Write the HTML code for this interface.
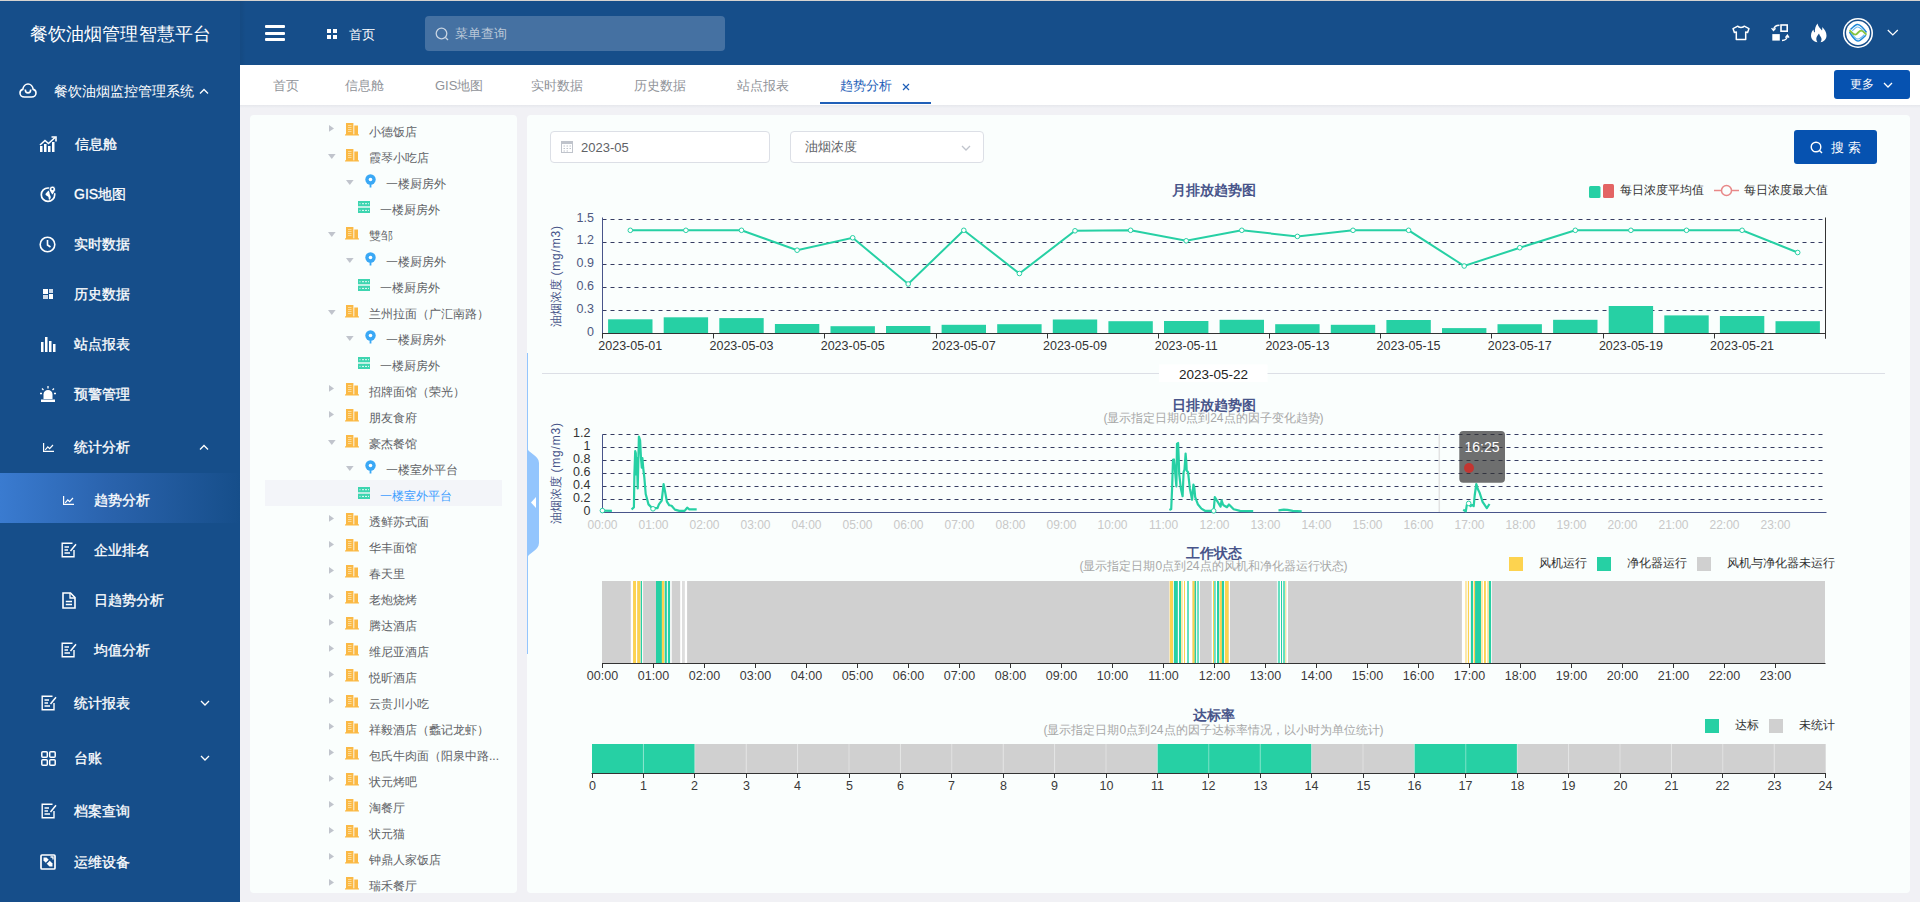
<!DOCTYPE html><html><head><meta charset="utf-8"><style>
*{margin:0;padding:0;box-sizing:border-box}
html,body{width:1920px;height:902px;overflow:hidden;background:#f1f1f5;font-family:"Liberation Sans",sans-serif}
.a{position:absolute}
.mi{position:absolute;color:#fff;font-size:14px;line-height:20px;white-space:nowrap;-webkit-text-stroke:0.3px #fff}
.tab{position:absolute;top:77px;font-size:13px;line-height:18px;color:#909399;white-space:nowrap}
.ti{position:absolute;font-size:12px;line-height:16px;color:#606266;white-space:nowrap}
svg{position:absolute;overflow:visible}
</style></head><body>
<div class="a" style="left:0;top:0;width:1920px;height:1px;background:#d6d3d0"></div>
<div class="a" style="left:0;top:1px;width:1920px;height:64px;background:#164e8a"></div>
<div class="a" style="left:0;top:65px;width:240px;height:837px;background:#164e8a"></div>
<div class="a" style="left:240px;top:1px;width:6px;height:64px;background:linear-gradient(90deg,rgba(0,0,0,0.06),rgba(0,0,0,0))"></div>
<div class="a" style="left:0;top:21px;width:240px;text-align:center;color:#fff;font-size:18px;line-height:26px;letter-spacing:0.2px;padding-left:1px">餐饮油烟管理智慧平台</div>
<div class="a" style="left:0;top:473px;width:240px;height:50px;background:linear-gradient(90deg,#3a7bd0 0%,#2a63ad 45%,#164e8a 100%)"></div>
<div class="mi" style="left:54px;top:81px;-webkit-text-stroke:0">餐饮油烟监控管理系统</div>
<div class="mi" style="left:75px;top:134px;font-size:14px">信息舱</div>
<div class="mi" style="left:74px;top:184px;font-size:14px">GIS地图</div>
<div class="mi" style="left:74px;top:234px;font-size:14px">实时数据</div>
<div class="mi" style="left:74px;top:284px;font-size:14px">历史数据</div>
<div class="mi" style="left:74px;top:334px;font-size:14px">站点报表</div>
<div class="mi" style="left:74px;top:384px;font-size:14px">预警管理</div>
<div class="mi" style="left:74px;top:437px;font-size:14px">统计分析</div>
<div class="mi" style="left:94px;top:490px;font-size:14px">趋势分析</div>
<div class="mi" style="left:94px;top:540px;font-size:14px">企业排名</div>
<div class="mi" style="left:94px;top:590px;font-size:14px">日趋势分析</div>
<div class="mi" style="left:94px;top:640px;font-size:14px">均值分析</div>
<div class="mi" style="left:74px;top:693px;font-size:14px">统计报表</div>
<div class="mi" style="left:74px;top:748px;font-size:14px">台账</div>
<div class="mi" style="left:74px;top:801px;font-size:14px">档案查询</div>
<div class="mi" style="left:74px;top:852px;font-size:14px">运维设备</div>
<svg style="left:199px;top:88px" width="10" height="6"><path d="M1 5.5 L5 1.5 L9 5.5" fill="none" stroke="#fff" stroke-width="1.3"/></svg>
<svg style="left:199px;top:444px" width="10" height="6"><path d="M1 5.5 L5 1.5 L9 5.5" fill="none" stroke="#fff" stroke-width="1.3"/></svg>
<svg style="left:200px;top:700px" width="10" height="6"><path d="M1 1 L5 5 L9 1" fill="none" stroke="#fff" stroke-width="1.3"/></svg>
<svg style="left:200px;top:755px" width="10" height="6"><path d="M1 1 L5 5 L9 1" fill="none" stroke="#fff" stroke-width="1.3"/></svg>
<svg style="left:19px;top:83px" width="18" height="15" viewBox="0 0 18 15"><path d="M5.5 14 C2.8 14 1 12.2 1 10 C1 8.2 2.2 6.8 3.8 6.4 C4.2 3.2 6.5 1 9 1 C11.5 1 13.8 3.2 14.2 6.4 C15.8 6.8 17 8.2 17 10 C17 12.2 15.2 14 12.5 14 Z" fill="none" stroke="#fff" stroke-width="1.6"/><path d="M6.3 6.5 C6.3 11 11.7 11 11.7 6.5" fill="none" stroke="#fff" stroke-width="1.6"/></svg>
<svg style="left:39px;top:136px" width="18" height="17" viewBox="0 0 18 17"><path d="M1 16 V10 H3.5 V16 Z M5 16 V8 H7.5 V16 Z M9 16 V10 H11.5 V16 Z M13 16 V6 H15.5 V16 Z" fill="#fff"/><path d="M1 9 L6 4.5 L9.5 7.5 L16 1.5" fill="none" stroke="#fff" stroke-width="1.6"/><path d="M12.5 1 H17 V5.5" fill="none" stroke="#fff" stroke-width="1.6"/></svg>
<svg style="left:40px;top:186px" width="17" height="17" viewBox="0 0 17 17"><path d="M10.5 2.4 C9.7 2.1 8.9 2 8 2 C4.3 2 1.3 5 1.3 8.7 C1.3 12.4 4.3 15.4 8 15.4 C11.7 15.4 14.7 12.4 14.7 8.7 C14.7 8.2 14.6 7.6 14.5 7.1" fill="none" stroke="#fff" stroke-width="1.7"/><path d="M8.5 4.5 C7.5 5.5 6.8 6.5 5.8 7.5 C5.2 8.1 5.5 9 6.2 9.5 C7 10 8 10.2 8.4 11 C8.8 11.8 8.5 13 9.2 14 C10 13.5 10.5 12.5 10.8 11.5 C11 10.5 10.2 9.5 9.8 8.5 C9.5 7.5 9.8 6 8.5 4.5 Z" fill="#fff"/><path d="M12.4 0.1 C10.5 0.1 9.2 1.5 9.2 3.2 C9.2 5 11 7 12.4 9.2 C13.8 7 15.6 5 15.6 3.2 C15.6 1.5 14.3 0.1 12.4 0.1 Z" fill="#fff" stroke="#164e8a" stroke-width="0.9"/><circle cx="12.4" cy="3.1" r="1.1" fill="#164e8a"/></svg>
<svg style="left:39px;top:236px" width="17" height="17" viewBox="0 0 17 17"><circle cx="8.5" cy="8.5" r="7.3" fill="none" stroke="#fff" stroke-width="1.6"/><path d="M8.5 4 V9 L11.5 11" fill="none" stroke="#fff" stroke-width="1.6"/></svg>
<svg style="left:43px;top:289px" width="10" height="10" viewBox="0 0 10 10"><rect x="0" y="0" width="5" height="5" fill="#fff"/><rect x="6" y="0" width="4" height="4" fill="#fff" opacity="0.8"/><rect x="0" y="6" width="5" height="4" fill="#fff" opacity="0.8"/><rect x="6" y="5" width="4" height="5" fill="#fff"/></svg>
<svg style="left:41px;top:337px" width="16" height="15" viewBox="0 0 16 15"><rect x="0" y="5" width="2.5" height="10" fill="#fff"/><rect x="4" y="0" width="2.5" height="15" fill="#fff"/><rect x="8" y="4" width="2.5" height="11" fill="#fff"/><rect x="12" y="7" width="2.5" height="8" fill="#fff"/></svg>
<svg style="left:40px;top:386px" width="16" height="16" viewBox="0 0 16 16"><path d="M3.5 13 V8.5 C3.5 5.5 5.5 4 8 4 C10.5 4 12.5 5.5 12.5 8.5 V13 Z" fill="#fff"/><rect x="1" y="13.5" width="14" height="2.5" fill="#fff"/><path d="M8 0 V2.5 M2 2.5 L3.5 4 M14 2.5 L12.5 4 M0 7.5 H2 M14 7.5 H16" stroke="#fff" stroke-width="1.3"/></svg>
<svg style="left:43px;top:443px" width="12" height="10" viewBox="0 0 12 10"><path d="M0.6 0 V8.4 H11" fill="none" stroke="#fff" stroke-width="1.2"/><path d="M2.2 6.8 L4.8 3.8 L6.6 5.6 L10 2" fill="none" stroke="#fff" stroke-width="1.2"/></svg>
<svg style="left:63px;top:496px" width="12" height="10" viewBox="0 0 12 10"><path d="M0.6 0 V8.4 H11" fill="none" stroke="#fff" stroke-width="1.2"/><path d="M2.2 6.8 L4.8 3.8 L6.6 5.6 L10 2" fill="none" stroke="#fff" stroke-width="1.2"/></svg>
<svg style="left:61px;top:542px" width="16" height="16" viewBox="0 0 16 16"><path d="M11.5 1.2 H1.2 V14.8 H13 V8" fill="none" stroke="#fff" stroke-width="1.4"/><path d="M3.5 5 H8 M3.5 8 H7 M3.5 11 H9" stroke="#fff" stroke-width="1.4"/><path d="M9.5 9 L15 2.2" stroke="#fff" stroke-width="1.5"/></svg>
<svg style="left:61px;top:642px" width="16" height="16" viewBox="0 0 16 16"><path d="M11.5 1.2 H1.2 V14.8 H13 V8" fill="none" stroke="#fff" stroke-width="1.4"/><path d="M3.5 5 H8 M3.5 8 H7 M3.5 11 H9" stroke="#fff" stroke-width="1.4"/><path d="M9.5 9 L15 2.2" stroke="#fff" stroke-width="1.5"/></svg>
<svg style="left:41px;top:695px" width="16" height="16" viewBox="0 0 16 16"><path d="M11.5 1.2 H1.2 V14.8 H13 V8" fill="none" stroke="#fff" stroke-width="1.4"/><path d="M3.5 5 H8 M3.5 8 H7 M3.5 11 H9" stroke="#fff" stroke-width="1.4"/><path d="M9.5 9 L15 2.2" stroke="#fff" stroke-width="1.5"/></svg>
<svg style="left:41px;top:803px" width="16" height="16" viewBox="0 0 16 16"><path d="M11.5 1.2 H1.2 V14.8 H13 V8" fill="none" stroke="#fff" stroke-width="1.4"/><path d="M3.5 5 H8 M3.5 8 H7 M3.5 11 H9" stroke="#fff" stroke-width="1.4"/><path d="M9.5 9 L15 2.2" stroke="#fff" stroke-width="1.5"/></svg>
<svg style="left:62px;top:592px" width="14" height="17" viewBox="0 0 14 17"><path d="M1 1 H8.5 L13 5.5 V16 H1 Z" fill="none" stroke="#fff" stroke-width="1.6"/><path d="M8 1 V6 H13" fill="none" stroke="#fff" stroke-width="1.3"/><path d="M3.8 9.5 H10 M3.8 12.5 H10" stroke="#fff" stroke-width="1.5"/></svg>
<svg style="left:41px;top:751px" width="15" height="15" viewBox="0 0 15 15"><rect x="0.8" y="0.8" width="5.5" height="5.5" rx="1" fill="none" stroke="#fff" stroke-width="1.5"/><rect x="8.7" y="0.8" width="5.5" height="5.5" rx="1" fill="none" stroke="#fff" stroke-width="1.5"/><rect x="0.8" y="8.7" width="5.5" height="5.5" rx="1" fill="none" stroke="#fff" stroke-width="1.5"/><rect x="8.7" y="8.7" width="5.5" height="5.5" rx="1" fill="none" stroke="#fff" stroke-width="1.5"/></svg>
<svg style="left:40px;top:854px" width="16" height="16" viewBox="0 0 16 16"><path d="M2 1 H14 C14.6 1 15 1.4 15 2 V14 C15 14.6 14.6 15 14 15 H2 C1.4 15 1 14.6 1 14 V2 C1 1.4 1.4 1 2 1 Z" fill="none" stroke="#fff" stroke-width="1.7"/><path d="M3.5 3.5 L6.5 3.5 L12.5 9.5 L12.5 12.5 L9.5 12.5 L3.5 6.5 Z" fill="#fff"/><path d="M6 9.5 L9.5 6" stroke="#164e8a" stroke-width="1.4"/><path d="M10.5 3 L13 3 L13 5.5" fill="none" stroke="#fff" stroke-width="1.3"/></svg>
<div class="a" style="left:265px;top:25px;width:20px;height:3px;background:#fff;border-radius:1px"></div>
<div class="a" style="left:265px;top:32px;width:20px;height:3px;background:#fff;border-radius:1px"></div>
<div class="a" style="left:265px;top:38px;width:20px;height:3px;background:#fff;border-radius:1px"></div>
<div class="a" style="left:327px;top:29px;width:4px;height:4px;background:#fff"></div>
<div class="a" style="left:327px;top:35px;width:4px;height:4px;background:#fff"></div>
<div class="a" style="left:333px;top:29px;width:4px;height:4px;background:#fff"></div>
<div class="a" style="left:333px;top:35px;width:4px;height:4px;background:#fff"></div>
<div class="a" style="left:349px;top:26px;color:#fff;font-size:13px;line-height:18px">首页</div>
<div class="a" style="left:425px;top:16px;width:300px;height:35px;background:#4571a2;border-radius:4px"></div>
<svg style="left:435px;top:27px" width="14" height="14"><circle cx="6.5" cy="6.5" r="5.3" fill="none" stroke="#c8d4e2" stroke-width="1.3"/><path d="M10.5 10.5 L13 13" stroke="#c8d4e2" stroke-width="1.3"/></svg>
<div class="a" style="left:455px;top:25px;color:#b9c7d8;font-size:13px;line-height:18px">菜单查询</div>
<svg style="left:1732px;top:25px" width="18" height="16"><path d="M5.8 1.2 L1 3.6 L2.4 7.4 L4.3 6.9 V14.6 H13.7 V6.9 L15.6 7.4 L17 3.6 L12.2 1.2 C11.4 2.8 6.6 2.8 5.8 1.2 Z" fill="none" stroke="#fff" stroke-width="1.5" stroke-linejoin="round"/></svg>
<svg style="left:1771px;top:24px" width="18" height="18"><rect x="10" y="1" width="6.2" height="6.2" fill="none" stroke="#fff" stroke-width="1.6"/><rect x="1.3" y="10.1" width="7.5" height="6.5" fill="#fff"/><path d="M8.5 1.3 C5 1.3 3 3 2.6 6" fill="none" stroke="#fff" stroke-width="1.5"/><path d="M0.6 4.2 L2.5 6.6 L4.6 4.4" fill="none" stroke="#fff" stroke-width="1.3"/><path d="M11 16.5 C14 16.5 16 15 16.4 12" fill="none" stroke="#fff" stroke-width="1.5"/><path d="M14.4 13.6 L16.4 11.2 L18 13.6" fill="none" stroke="#fff" stroke-width="1.3"/></svg>
<svg style="left:1810px;top:23px" width="18" height="20"><path d="M7.5 0.5 C8 3.5 10 5 12 7.5 C12.5 6 12.3 5 12 4 C14.5 6 16.5 9 16.5 12.5 C16.5 16.5 13.5 19 10.5 19.3 C11.8 17.5 12 15.5 10.5 13.5 C10 12.8 9.3 11.8 9 10.5 C8 12 7 13 6.5 14.5 C6 16 6.5 18 7.5 19.3 C3.5 18.5 1 16 1 12.5 C1 9.5 2.5 7.5 3.5 6.5 C3.5 8 4 9 5 9.5 C4.5 6 5.5 3 7.5 0.5 Z" fill="#fff"/></svg>
<svg style="left:1843px;top:18px" width="30" height="30"><circle cx="15" cy="15" r="15" fill="#fff"/><circle cx="15" cy="15" r="13.4" fill="#164e8a"/><circle cx="15" cy="15" r="11.9" fill="#fff"/><path d="M7.5 11.5 C10 9 12 7 14 6.5 C16 6 17.5 7.5 19 9 C20.5 10.5 22 12 23.5 14.5" fill="none" stroke="#1e88d8" stroke-width="1.5"/><path d="M9.2 12.8 C11 11 12.5 9.5 14 9 C15.5 8.6 17 9.8 18.5 11.2 C19.8 12.5 20.8 13.5 21.8 15" fill="none" stroke="#6cb8ec" stroke-width="1.1"/><path d="M6.5 14 C8 16.5 10 19.5 12 21.5 C13.5 23 15.5 23.3 17 22.3 C19 21 21 19 22.8 17.2" fill="none" stroke="#1e88d8" stroke-width="1.5"/><path d="M8.5 15.5 C10 17.5 11.5 19.5 13 20.5 C14.5 21.3 16 21 17.5 20 C19 19 20 18 21.3 16.6" fill="none" stroke="#6cb8ec" stroke-width="1.1"/><path d="M6.3 12.4 C8.3 13.2 9.8 16.6 12.3 16.6 C14.6 16.6 15.6 12.6 18.1 12.6 C20.4 12.6 22 15.6 23.6 16.6" fill="none" stroke="#86c440" stroke-width="1.9"/></svg>
<svg style="left:1887px;top:29px" width="12" height="8"><path d="M0.8 1 L5.8 6 L10.8 1" fill="none" stroke="#fff" stroke-width="1.2"/></svg>
<div class="a" style="left:240px;top:65px;width:1680px;height:40px;background:#fff"></div>
<div class="a" style="left:240px;top:105px;width:1680px;height:3px;background:linear-gradient(180deg,#e6e7ec,#f0f1f5)"></div>
<div class="tab" style="left:273px">首页</div>
<div class="tab" style="left:345px">信息舱</div>
<div class="tab" style="left:435px">GIS地图</div>
<div class="tab" style="left:531px">实时数据</div>
<div class="tab" style="left:634px">历史数据</div>
<div class="tab" style="left:737px">站点报表</div>
<div class="tab" style="left:840px;color:#1f5fb8">趋势分析</div>
<svg style="left:902px;top:83px" width="8" height="8"><path d="M1 1 L7 7 M7 1 L1 7" stroke="#1f5fb8" stroke-width="1.2"/></svg>
<div class="a" style="left:820px;top:102px;width:111px;height:2px;background:#1f5fb8"></div>
<div class="a" style="left:1834px;top:70px;width:76px;height:29px;background:#0652b0;border-radius:3px"></div>
<div class="a" style="left:1850px;top:76px;color:#fff;font-size:12px;line-height:17px">更多</div>
<svg style="left:1883px;top:82px" width="10" height="6"><path d="M1 1 L5 5 L9 1" fill="none" stroke="#fff" stroke-width="1.3"/></svg>
<div class="a" style="left:250px;top:115px;width:267px;height:778px;background:#fafefd;border-radius:4px"></div>
<div class="a" style="left:265px;top:480px;width:237px;height:26px;background:#f3f5f9"></div>
<svg style="left:329px;top:125px" width="6" height="8"><path d="M0 0 L5 3.4 L0 6.8 Z" fill="#c0c4cc"/></svg>
<svg style="left:345px;top:123px" width="14" height="13"><path d="M1 0 H8.4 V12 H1 Z M9.3 2.5 H13 V12 H9.3 Z" fill="#fbb945"/><path d="M3 2.5 H6.5 M3 4.5 H6.5 M3 6.5 H6.5 M3 8.5 H6.5" stroke="#fde0a0" stroke-width="0.9"/><rect x="0" y="11.3" width="14" height="1.2" fill="#fbb945"/></svg>
<div class="ti" style="left:369px;top:123.5px;color:#606266">小德饭店</div>
<svg style="left:327.5px;top:154px" width="9" height="6"><path d="M0 0 L7.6 0 L3.8 5 Z" fill="#c0c4cc"/></svg>
<svg style="left:345px;top:149px" width="14" height="13"><path d="M1 0 H8.4 V12 H1 Z M9.3 2.5 H13 V12 H9.3 Z" fill="#fbb945"/><path d="M3 2.5 H6.5 M3 4.5 H6.5 M3 6.5 H6.5 M3 8.5 H6.5" stroke="#fde0a0" stroke-width="0.9"/><rect x="0" y="11.3" width="14" height="1.2" fill="#fbb945"/></svg>
<div class="ti" style="left:369px;top:149.5px;color:#606266">霞琴小吃店</div>
<svg style="left:345.5px;top:180px" width="9" height="6"><path d="M0 0 L7.6 0 L3.8 5 Z" fill="#c0c4cc"/></svg>
<svg style="left:365px;top:174px" width="11" height="14"><circle cx="5.5" cy="5.5" r="5.2" fill="#3aa8f5"/><circle cx="5.5" cy="5.5" r="1.8" fill="#fff"/><path d="M4.6 9 H6.4 V13.5 H4.6 Z" fill="#3aa8f5"/></svg>
<div class="ti" style="left:386px;top:175.5px;color:#606266">一楼厨房外</div>
<svg style="left:358px;top:201px" width="12" height="12"><rect x="0" y="0" width="12" height="5.3" fill="#3dd5b0"/><rect x="0" y="6.7" width="12" height="5.3" fill="#3dd5b0"/><path d="M1.5 2.7 H2.5 M4 2.7 H6 M7 2.7 H9 M10 2.7 H11 M1.5 9.4 H2.5 M4 9.4 H6 M7 9.4 H9 M10 9.4 H11" stroke="#e8fbf6" stroke-width="1"/></svg>
<div class="ti" style="left:380px;top:201.5px;color:#606266">一楼厨房外</div>
<svg style="left:327.5px;top:232px" width="9" height="6"><path d="M0 0 L7.6 0 L3.8 5 Z" fill="#c0c4cc"/></svg>
<svg style="left:345px;top:227px" width="14" height="13"><path d="M1 0 H8.4 V12 H1 Z M9.3 2.5 H13 V12 H9.3 Z" fill="#fbb945"/><path d="M3 2.5 H6.5 M3 4.5 H6.5 M3 6.5 H6.5 M3 8.5 H6.5" stroke="#fde0a0" stroke-width="0.9"/><rect x="0" y="11.3" width="14" height="1.2" fill="#fbb945"/></svg>
<div class="ti" style="left:369px;top:227.5px;color:#606266">雙邹</div>
<svg style="left:345.5px;top:258px" width="9" height="6"><path d="M0 0 L7.6 0 L3.8 5 Z" fill="#c0c4cc"/></svg>
<svg style="left:365px;top:252px" width="11" height="14"><circle cx="5.5" cy="5.5" r="5.2" fill="#3aa8f5"/><circle cx="5.5" cy="5.5" r="1.8" fill="#fff"/><path d="M4.6 9 H6.4 V13.5 H4.6 Z" fill="#3aa8f5"/></svg>
<div class="ti" style="left:386px;top:253.5px;color:#606266">一楼厨房外</div>
<svg style="left:358px;top:279px" width="12" height="12"><rect x="0" y="0" width="12" height="5.3" fill="#3dd5b0"/><rect x="0" y="6.7" width="12" height="5.3" fill="#3dd5b0"/><path d="M1.5 2.7 H2.5 M4 2.7 H6 M7 2.7 H9 M10 2.7 H11 M1.5 9.4 H2.5 M4 9.4 H6 M7 9.4 H9 M10 9.4 H11" stroke="#e8fbf6" stroke-width="1"/></svg>
<div class="ti" style="left:380px;top:279.5px;color:#606266">一楼厨房外</div>
<svg style="left:327.5px;top:310px" width="9" height="6"><path d="M0 0 L7.6 0 L3.8 5 Z" fill="#c0c4cc"/></svg>
<svg style="left:345px;top:305px" width="14" height="13"><path d="M1 0 H8.4 V12 H1 Z M9.3 2.5 H13 V12 H9.3 Z" fill="#fbb945"/><path d="M3 2.5 H6.5 M3 4.5 H6.5 M3 6.5 H6.5 M3 8.5 H6.5" stroke="#fde0a0" stroke-width="0.9"/><rect x="0" y="11.3" width="14" height="1.2" fill="#fbb945"/></svg>
<div class="ti" style="left:369px;top:305.5px;color:#606266">兰州拉面（广汇南路）</div>
<svg style="left:345.5px;top:336px" width="9" height="6"><path d="M0 0 L7.6 0 L3.8 5 Z" fill="#c0c4cc"/></svg>
<svg style="left:365px;top:330px" width="11" height="14"><circle cx="5.5" cy="5.5" r="5.2" fill="#3aa8f5"/><circle cx="5.5" cy="5.5" r="1.8" fill="#fff"/><path d="M4.6 9 H6.4 V13.5 H4.6 Z" fill="#3aa8f5"/></svg>
<div class="ti" style="left:386px;top:331.5px;color:#606266">一楼厨房外</div>
<svg style="left:358px;top:357px" width="12" height="12"><rect x="0" y="0" width="12" height="5.3" fill="#3dd5b0"/><rect x="0" y="6.7" width="12" height="5.3" fill="#3dd5b0"/><path d="M1.5 2.7 H2.5 M4 2.7 H6 M7 2.7 H9 M10 2.7 H11 M1.5 9.4 H2.5 M4 9.4 H6 M7 9.4 H9 M10 9.4 H11" stroke="#e8fbf6" stroke-width="1"/></svg>
<div class="ti" style="left:380px;top:357.5px;color:#606266">一楼厨房外</div>
<svg style="left:329px;top:385px" width="6" height="8"><path d="M0 0 L5 3.4 L0 6.8 Z" fill="#c0c4cc"/></svg>
<svg style="left:345px;top:383px" width="14" height="13"><path d="M1 0 H8.4 V12 H1 Z M9.3 2.5 H13 V12 H9.3 Z" fill="#fbb945"/><path d="M3 2.5 H6.5 M3 4.5 H6.5 M3 6.5 H6.5 M3 8.5 H6.5" stroke="#fde0a0" stroke-width="0.9"/><rect x="0" y="11.3" width="14" height="1.2" fill="#fbb945"/></svg>
<div class="ti" style="left:369px;top:383.5px;color:#606266">招牌面馆（荣光）</div>
<svg style="left:329px;top:411px" width="6" height="8"><path d="M0 0 L5 3.4 L0 6.8 Z" fill="#c0c4cc"/></svg>
<svg style="left:345px;top:409px" width="14" height="13"><path d="M1 0 H8.4 V12 H1 Z M9.3 2.5 H13 V12 H9.3 Z" fill="#fbb945"/><path d="M3 2.5 H6.5 M3 4.5 H6.5 M3 6.5 H6.5 M3 8.5 H6.5" stroke="#fde0a0" stroke-width="0.9"/><rect x="0" y="11.3" width="14" height="1.2" fill="#fbb945"/></svg>
<div class="ti" style="left:369px;top:409.5px;color:#606266">朋友食府</div>
<svg style="left:327.5px;top:440px" width="9" height="6"><path d="M0 0 L7.6 0 L3.8 5 Z" fill="#c0c4cc"/></svg>
<svg style="left:345px;top:435px" width="14" height="13"><path d="M1 0 H8.4 V12 H1 Z M9.3 2.5 H13 V12 H9.3 Z" fill="#fbb945"/><path d="M3 2.5 H6.5 M3 4.5 H6.5 M3 6.5 H6.5 M3 8.5 H6.5" stroke="#fde0a0" stroke-width="0.9"/><rect x="0" y="11.3" width="14" height="1.2" fill="#fbb945"/></svg>
<div class="ti" style="left:369px;top:435.5px;color:#606266">豪杰餐馆</div>
<svg style="left:345.5px;top:466px" width="9" height="6"><path d="M0 0 L7.6 0 L3.8 5 Z" fill="#c0c4cc"/></svg>
<svg style="left:365px;top:460px" width="11" height="14"><circle cx="5.5" cy="5.5" r="5.2" fill="#3aa8f5"/><circle cx="5.5" cy="5.5" r="1.8" fill="#fff"/><path d="M4.6 9 H6.4 V13.5 H4.6 Z" fill="#3aa8f5"/></svg>
<div class="ti" style="left:386px;top:461.5px;color:#606266">一楼室外平台</div>
<svg style="left:358px;top:487px" width="12" height="12"><rect x="0" y="0" width="12" height="5.3" fill="#3dd5b0"/><rect x="0" y="6.7" width="12" height="5.3" fill="#3dd5b0"/><path d="M1.5 2.7 H2.5 M4 2.7 H6 M7 2.7 H9 M10 2.7 H11 M1.5 9.4 H2.5 M4 9.4 H6 M7 9.4 H9 M10 9.4 H11" stroke="#e8fbf6" stroke-width="1"/></svg>
<div class="ti" style="left:380px;top:487.5px;color:#409eff">一楼室外平台</div>
<svg style="left:329px;top:515px" width="6" height="8"><path d="M0 0 L5 3.4 L0 6.8 Z" fill="#c0c4cc"/></svg>
<svg style="left:345px;top:513px" width="14" height="13"><path d="M1 0 H8.4 V12 H1 Z M9.3 2.5 H13 V12 H9.3 Z" fill="#fbb945"/><path d="M3 2.5 H6.5 M3 4.5 H6.5 M3 6.5 H6.5 M3 8.5 H6.5" stroke="#fde0a0" stroke-width="0.9"/><rect x="0" y="11.3" width="14" height="1.2" fill="#fbb945"/></svg>
<div class="ti" style="left:369px;top:513.5px;color:#606266">透鲜苏式面</div>
<svg style="left:329px;top:541px" width="6" height="8"><path d="M0 0 L5 3.4 L0 6.8 Z" fill="#c0c4cc"/></svg>
<svg style="left:345px;top:539px" width="14" height="13"><path d="M1 0 H8.4 V12 H1 Z M9.3 2.5 H13 V12 H9.3 Z" fill="#fbb945"/><path d="M3 2.5 H6.5 M3 4.5 H6.5 M3 6.5 H6.5 M3 8.5 H6.5" stroke="#fde0a0" stroke-width="0.9"/><rect x="0" y="11.3" width="14" height="1.2" fill="#fbb945"/></svg>
<div class="ti" style="left:369px;top:539.5px;color:#606266">华丰面馆</div>
<svg style="left:329px;top:567px" width="6" height="8"><path d="M0 0 L5 3.4 L0 6.8 Z" fill="#c0c4cc"/></svg>
<svg style="left:345px;top:565px" width="14" height="13"><path d="M1 0 H8.4 V12 H1 Z M9.3 2.5 H13 V12 H9.3 Z" fill="#fbb945"/><path d="M3 2.5 H6.5 M3 4.5 H6.5 M3 6.5 H6.5 M3 8.5 H6.5" stroke="#fde0a0" stroke-width="0.9"/><rect x="0" y="11.3" width="14" height="1.2" fill="#fbb945"/></svg>
<div class="ti" style="left:369px;top:565.5px;color:#606266">春天里</div>
<svg style="left:329px;top:593px" width="6" height="8"><path d="M0 0 L5 3.4 L0 6.8 Z" fill="#c0c4cc"/></svg>
<svg style="left:345px;top:591px" width="14" height="13"><path d="M1 0 H8.4 V12 H1 Z M9.3 2.5 H13 V12 H9.3 Z" fill="#fbb945"/><path d="M3 2.5 H6.5 M3 4.5 H6.5 M3 6.5 H6.5 M3 8.5 H6.5" stroke="#fde0a0" stroke-width="0.9"/><rect x="0" y="11.3" width="14" height="1.2" fill="#fbb945"/></svg>
<div class="ti" style="left:369px;top:591.5px;color:#606266">老炮烧烤</div>
<svg style="left:329px;top:619px" width="6" height="8"><path d="M0 0 L5 3.4 L0 6.8 Z" fill="#c0c4cc"/></svg>
<svg style="left:345px;top:617px" width="14" height="13"><path d="M1 0 H8.4 V12 H1 Z M9.3 2.5 H13 V12 H9.3 Z" fill="#fbb945"/><path d="M3 2.5 H6.5 M3 4.5 H6.5 M3 6.5 H6.5 M3 8.5 H6.5" stroke="#fde0a0" stroke-width="0.9"/><rect x="0" y="11.3" width="14" height="1.2" fill="#fbb945"/></svg>
<div class="ti" style="left:369px;top:617.5px;color:#606266">腾达酒店</div>
<svg style="left:329px;top:645px" width="6" height="8"><path d="M0 0 L5 3.4 L0 6.8 Z" fill="#c0c4cc"/></svg>
<svg style="left:345px;top:643px" width="14" height="13"><path d="M1 0 H8.4 V12 H1 Z M9.3 2.5 H13 V12 H9.3 Z" fill="#fbb945"/><path d="M3 2.5 H6.5 M3 4.5 H6.5 M3 6.5 H6.5 M3 8.5 H6.5" stroke="#fde0a0" stroke-width="0.9"/><rect x="0" y="11.3" width="14" height="1.2" fill="#fbb945"/></svg>
<div class="ti" style="left:369px;top:643.5px;color:#606266">维尼亚酒店</div>
<svg style="left:329px;top:671px" width="6" height="8"><path d="M0 0 L5 3.4 L0 6.8 Z" fill="#c0c4cc"/></svg>
<svg style="left:345px;top:669px" width="14" height="13"><path d="M1 0 H8.4 V12 H1 Z M9.3 2.5 H13 V12 H9.3 Z" fill="#fbb945"/><path d="M3 2.5 H6.5 M3 4.5 H6.5 M3 6.5 H6.5 M3 8.5 H6.5" stroke="#fde0a0" stroke-width="0.9"/><rect x="0" y="11.3" width="14" height="1.2" fill="#fbb945"/></svg>
<div class="ti" style="left:369px;top:669.5px;color:#606266">悦昕酒店</div>
<svg style="left:329px;top:697px" width="6" height="8"><path d="M0 0 L5 3.4 L0 6.8 Z" fill="#c0c4cc"/></svg>
<svg style="left:345px;top:695px" width="14" height="13"><path d="M1 0 H8.4 V12 H1 Z M9.3 2.5 H13 V12 H9.3 Z" fill="#fbb945"/><path d="M3 2.5 H6.5 M3 4.5 H6.5 M3 6.5 H6.5 M3 8.5 H6.5" stroke="#fde0a0" stroke-width="0.9"/><rect x="0" y="11.3" width="14" height="1.2" fill="#fbb945"/></svg>
<div class="ti" style="left:369px;top:695.5px;color:#606266">云贵川小吃</div>
<svg style="left:329px;top:723px" width="6" height="8"><path d="M0 0 L5 3.4 L0 6.8 Z" fill="#c0c4cc"/></svg>
<svg style="left:345px;top:721px" width="14" height="13"><path d="M1 0 H8.4 V12 H1 Z M9.3 2.5 H13 V12 H9.3 Z" fill="#fbb945"/><path d="M3 2.5 H6.5 M3 4.5 H6.5 M3 6.5 H6.5 M3 8.5 H6.5" stroke="#fde0a0" stroke-width="0.9"/><rect x="0" y="11.3" width="14" height="1.2" fill="#fbb945"/></svg>
<div class="ti" style="left:369px;top:721.5px;color:#606266">祥毅酒店（蠡记龙虾）</div>
<svg style="left:329px;top:749px" width="6" height="8"><path d="M0 0 L5 3.4 L0 6.8 Z" fill="#c0c4cc"/></svg>
<svg style="left:345px;top:747px" width="14" height="13"><path d="M1 0 H8.4 V12 H1 Z M9.3 2.5 H13 V12 H9.3 Z" fill="#fbb945"/><path d="M3 2.5 H6.5 M3 4.5 H6.5 M3 6.5 H6.5 M3 8.5 H6.5" stroke="#fde0a0" stroke-width="0.9"/><rect x="0" y="11.3" width="14" height="1.2" fill="#fbb945"/></svg>
<div class="ti" style="left:369px;top:747.5px;color:#606266">包氏牛肉面（阳泉中路...</div>
<svg style="left:329px;top:775px" width="6" height="8"><path d="M0 0 L5 3.4 L0 6.8 Z" fill="#c0c4cc"/></svg>
<svg style="left:345px;top:773px" width="14" height="13"><path d="M1 0 H8.4 V12 H1 Z M9.3 2.5 H13 V12 H9.3 Z" fill="#fbb945"/><path d="M3 2.5 H6.5 M3 4.5 H6.5 M3 6.5 H6.5 M3 8.5 H6.5" stroke="#fde0a0" stroke-width="0.9"/><rect x="0" y="11.3" width="14" height="1.2" fill="#fbb945"/></svg>
<div class="ti" style="left:369px;top:773.5px;color:#606266">状元烤吧</div>
<svg style="left:329px;top:801px" width="6" height="8"><path d="M0 0 L5 3.4 L0 6.8 Z" fill="#c0c4cc"/></svg>
<svg style="left:345px;top:799px" width="14" height="13"><path d="M1 0 H8.4 V12 H1 Z M9.3 2.5 H13 V12 H9.3 Z" fill="#fbb945"/><path d="M3 2.5 H6.5 M3 4.5 H6.5 M3 6.5 H6.5 M3 8.5 H6.5" stroke="#fde0a0" stroke-width="0.9"/><rect x="0" y="11.3" width="14" height="1.2" fill="#fbb945"/></svg>
<div class="ti" style="left:369px;top:799.5px;color:#606266">淘餐厅</div>
<svg style="left:329px;top:827px" width="6" height="8"><path d="M0 0 L5 3.4 L0 6.8 Z" fill="#c0c4cc"/></svg>
<svg style="left:345px;top:825px" width="14" height="13"><path d="M1 0 H8.4 V12 H1 Z M9.3 2.5 H13 V12 H9.3 Z" fill="#fbb945"/><path d="M3 2.5 H6.5 M3 4.5 H6.5 M3 6.5 H6.5 M3 8.5 H6.5" stroke="#fde0a0" stroke-width="0.9"/><rect x="0" y="11.3" width="14" height="1.2" fill="#fbb945"/></svg>
<div class="ti" style="left:369px;top:825.5px;color:#606266">状元猫</div>
<svg style="left:329px;top:853px" width="6" height="8"><path d="M0 0 L5 3.4 L0 6.8 Z" fill="#c0c4cc"/></svg>
<svg style="left:345px;top:851px" width="14" height="13"><path d="M1 0 H8.4 V12 H1 Z M9.3 2.5 H13 V12 H9.3 Z" fill="#fbb945"/><path d="M3 2.5 H6.5 M3 4.5 H6.5 M3 6.5 H6.5 M3 8.5 H6.5" stroke="#fde0a0" stroke-width="0.9"/><rect x="0" y="11.3" width="14" height="1.2" fill="#fbb945"/></svg>
<div class="ti" style="left:369px;top:851.5px;color:#606266">钟鼎人家饭店</div>
<svg style="left:329px;top:879px" width="6" height="8"><path d="M0 0 L5 3.4 L0 6.8 Z" fill="#c0c4cc"/></svg>
<svg style="left:345px;top:877px" width="14" height="13"><path d="M1 0 H8.4 V12 H1 Z M9.3 2.5 H13 V12 H9.3 Z" fill="#fbb945"/><path d="M3 2.5 H6.5 M3 4.5 H6.5 M3 6.5 H6.5 M3 8.5 H6.5" stroke="#fde0a0" stroke-width="0.9"/><rect x="0" y="11.3" width="14" height="1.2" fill="#fbb945"/></svg>
<div class="ti" style="left:369px;top:877.5px;color:#606266">瑞禾餐厅</div>
<div class="a" style="left:527px;top:115px;width:1383px;height:778px;background:#fafefd;border-radius:4px"></div>
<div class="a" style="left:527px;top:353px;width:1px;height:301px;background:#93c5fd"></div>
<svg style="left:527px;top:447px" width="13" height="112"><path d="M0 0 C0 6 12 8 12 16 V96 C12 104 0 106 0 112 Z" fill="#93c5fd"/><path d="M9 50 L4 55.5 L9 61 Z" fill="#fff"/></svg>
<div class="a" style="left:550px;top:131px;width:220px;height:32px;border:1px solid #dcdfe6;border-radius:4px;background:#fff"></div>
<svg style="left:561px;top:140px" width="12" height="13"><rect x="0.5" y="1.5" width="11" height="11" fill="none" stroke="#c0c4cc" stroke-width="1"/><rect x="0.5" y="1.5" width="11" height="2.5" fill="#c0c4cc"/><path d="M2.5 6 H4 M5.5 6 H7 M8.5 6 H10 M2.5 8.5 H4 M5.5 8.5 H7 M8.5 8.5 H10 M2.5 11 H4 M5.5 11 H7" stroke="#c0c4cc" stroke-width="1"/></svg>
<div class="a" style="left:581px;top:139px;color:#606266;font-size:13px;line-height:17px">2023-05</div>
<div class="a" style="left:790px;top:131px;width:194px;height:32px;border:1px solid #dcdfe6;border-radius:4px;background:#fff"></div>
<div class="a" style="left:805px;top:138px;color:#606266;font-size:13px;line-height:18px">油烟浓度</div>
<svg style="left:961px;top:145px" width="10" height="6"><path d="M1 1 L5 5 L9 1" fill="none" stroke="#c0c4cc" stroke-width="1.3"/></svg>
<div class="a" style="left:1794px;top:130px;width:83px;height:34px;background:#0652b0;border-radius:3px"></div>
<svg style="left:1810px;top:141px" width="13" height="13"><circle cx="6" cy="6" r="4.8" fill="none" stroke="#fff" stroke-width="1.4"/><path d="M9.5 9.5 L12 12" stroke="#fff" stroke-width="1.4"/></svg>
<div class="a" style="left:1831px;top:139px;color:#fff;font-size:13px;line-height:18px;letter-spacing:4px">搜索</div>
<svg style="left:0;top:0" width="1920" height="902" viewBox="0 0 1920 902"><line x1="602.5" y1="219.5" x2="1825.5" y2="219.5" stroke="#363d62" stroke-width="1" stroke-dasharray="4 4"/><line x1="602.5" y1="242.5" x2="1825.5" y2="242.5" stroke="#363d62" stroke-width="1" stroke-dasharray="4 4"/><line x1="602.5" y1="264.5" x2="1825.5" y2="264.5" stroke="#363d62" stroke-width="1" stroke-dasharray="4 4"/><line x1="602.5" y1="287.5" x2="1825.5" y2="287.5" stroke="#363d62" stroke-width="1" stroke-dasharray="4 4"/><line x1="602.5" y1="310.5" x2="1825.5" y2="310.5" stroke="#363d62" stroke-width="1" stroke-dasharray="4 4"/><rect x="608.1" y="319.3" width="44.4" height="13.7" fill="#26d0a4"/><rect x="663.7" y="317.3" width="44.4" height="15.7" fill="#26d0a4"/><rect x="719.3" y="318.1" width="44.4" height="14.9" fill="#26d0a4"/><rect x="774.9" y="324.0" width="44.4" height="9.0" fill="#26d0a4"/><rect x="830.5" y="326.2" width="44.4" height="6.8" fill="#26d0a4"/><rect x="886.0" y="326.0" width="44.4" height="7.0" fill="#26d0a4"/><rect x="941.6" y="324.8" width="44.4" height="8.2" fill="#26d0a4"/><rect x="997.2" y="324.2" width="44.4" height="8.8" fill="#26d0a4"/><rect x="1052.8" y="319.5" width="44.4" height="13.5" fill="#26d0a4"/><rect x="1108.4" y="321.2" width="44.4" height="11.8" fill="#26d0a4"/><rect x="1164.0" y="321.0" width="44.4" height="12.0" fill="#26d0a4"/><rect x="1219.6" y="319.8" width="44.4" height="13.2" fill="#26d0a4"/><rect x="1275.2" y="324.2" width="44.4" height="8.8" fill="#26d0a4"/><rect x="1330.8" y="324.8" width="44.4" height="8.2" fill="#26d0a4"/><rect x="1386.4" y="320.0" width="44.4" height="13.0" fill="#26d0a4"/><rect x="1442.0" y="328.1" width="44.4" height="4.9" fill="#26d0a4"/><rect x="1497.5" y="324.2" width="44.4" height="8.8" fill="#26d0a4"/><rect x="1553.1" y="319.8" width="44.4" height="13.2" fill="#26d0a4"/><rect x="1608.7" y="306.0" width="44.4" height="27.0" fill="#26d0a4"/><rect x="1664.3" y="315.4" width="44.4" height="17.6" fill="#26d0a4"/><rect x="1719.9" y="316.0" width="44.4" height="17.0" fill="#26d0a4"/><rect x="1775.5" y="321.2" width="44.4" height="11.8" fill="#26d0a4"/><line x1="602.5" y1="217.5" x2="602.5" y2="333.5" stroke="#48558a" stroke-width="1"/><line x1="1825.5" y1="217.5" x2="1825.5" y2="333.5" stroke="#333" stroke-width="1"/><line x1="602.0" y1="333.5" x2="1826.0" y2="333.5" stroke="#333" stroke-width="1"/><line x1="602.5" y1="333.5" x2="602.5" y2="338.5" stroke="#333" stroke-width="1"/><line x1="713.5" y1="333.5" x2="713.5" y2="338.5" stroke="#333" stroke-width="1"/><line x1="824.5" y1="333.5" x2="824.5" y2="338.5" stroke="#333" stroke-width="1"/><line x1="936.5" y1="333.5" x2="936.5" y2="338.5" stroke="#333" stroke-width="1"/><line x1="1047.5" y1="333.5" x2="1047.5" y2="338.5" stroke="#333" stroke-width="1"/><line x1="1158.5" y1="333.5" x2="1158.5" y2="338.5" stroke="#333" stroke-width="1"/><line x1="1269.5" y1="333.5" x2="1269.5" y2="338.5" stroke="#333" stroke-width="1"/><line x1="1380.5" y1="333.5" x2="1380.5" y2="338.5" stroke="#333" stroke-width="1"/><line x1="1491.5" y1="333.5" x2="1491.5" y2="338.5" stroke="#333" stroke-width="1"/><line x1="1603.5" y1="333.5" x2="1603.5" y2="338.5" stroke="#333" stroke-width="1"/><line x1="1714.5" y1="333.5" x2="1714.5" y2="338.5" stroke="#333" stroke-width="1"/><line x1="1825.5" y1="333.5" x2="1825.5" y2="338.5" stroke="#333" stroke-width="1"/><line x1="1825.5" y1="333.5" x2="1825.5" y2="338.5" stroke="#333" stroke-width="1"/><text x="630.3" y="350.0" text-anchor="middle" font-size="12.5" fill="#333" font-family="Liberation Sans, sans-serif">2023-05-01</text><text x="741.5" y="350.0" text-anchor="middle" font-size="12.5" fill="#333" font-family="Liberation Sans, sans-serif">2023-05-03</text><text x="852.7" y="350.0" text-anchor="middle" font-size="12.5" fill="#333" font-family="Liberation Sans, sans-serif">2023-05-05</text><text x="963.8" y="350.0" text-anchor="middle" font-size="12.5" fill="#333" font-family="Liberation Sans, sans-serif">2023-05-07</text><text x="1075.0" y="350.0" text-anchor="middle" font-size="12.5" fill="#333" font-family="Liberation Sans, sans-serif">2023-05-09</text><text x="1186.2" y="350.0" text-anchor="middle" font-size="12.5" fill="#333" font-family="Liberation Sans, sans-serif">2023-05-11</text><text x="1297.4" y="350.0" text-anchor="middle" font-size="12.5" fill="#333" font-family="Liberation Sans, sans-serif">2023-05-13</text><text x="1408.6" y="350.0" text-anchor="middle" font-size="12.5" fill="#333" font-family="Liberation Sans, sans-serif">2023-05-15</text><text x="1519.8" y="350.0" text-anchor="middle" font-size="12.5" fill="#333" font-family="Liberation Sans, sans-serif">2023-05-17</text><text x="1630.9" y="350.0" text-anchor="middle" font-size="12.5" fill="#333" font-family="Liberation Sans, sans-serif">2023-05-19</text><text x="1742.1" y="350.0" text-anchor="middle" font-size="12.5" fill="#333" font-family="Liberation Sans, sans-serif">2023-05-21</text><text x="594" y="335.5" text-anchor="end" font-size="12.5" fill="#4e5880" font-family="Liberation Sans, sans-serif">0</text><text x="594" y="312.7" text-anchor="end" font-size="12.5" fill="#4e5880" font-family="Liberation Sans, sans-serif">0.3</text><text x="594" y="289.9" text-anchor="end" font-size="12.5" fill="#4e5880" font-family="Liberation Sans, sans-serif">0.6</text><text x="594" y="267.1" text-anchor="end" font-size="12.5" fill="#4e5880" font-family="Liberation Sans, sans-serif">0.9</text><text x="594" y="244.3" text-anchor="end" font-size="12.5" fill="#4e5880" font-family="Liberation Sans, sans-serif">1.2</text><text x="594" y="221.5" text-anchor="end" font-size="12.5" fill="#4e5880" font-family="Liberation Sans, sans-serif">1.5</text><text transform="translate(559.5,276) rotate(-90)" text-anchor="middle" font-size="12" fill="#48558a" font-family="Liberation Sans, sans-serif">油烟浓度 <tspan letter-spacing="0.8">(mg/m3)</tspan></text><polyline points="630.3,230.3 685.9,230.3 741.5,230.3 797.1,250.2 852.7,237.8 908.2,284 963.8,230.3 1019.4,273.5 1075.0,230.8 1130.6,230.3 1186.2,240.8 1241.8,230.3 1297.4,236.4 1353.0,230.3 1408.6,230.3 1464.2,266 1519.8,247.7 1575.3,230.3 1630.9,230.3 1686.5,230.3 1742.1,230.3 1797.7,252.5" fill="none" stroke="#26d0a4" stroke-width="2"/><circle cx="630.3" cy="230.3" r="2.3" fill="#fff" stroke="#26d0a4" stroke-width="1"/><circle cx="685.9" cy="230.3" r="2.3" fill="#fff" stroke="#26d0a4" stroke-width="1"/><circle cx="741.5" cy="230.3" r="2.3" fill="#fff" stroke="#26d0a4" stroke-width="1"/><circle cx="797.1" cy="250.2" r="2.3" fill="#fff" stroke="#26d0a4" stroke-width="1"/><circle cx="852.7" cy="237.8" r="2.3" fill="#fff" stroke="#26d0a4" stroke-width="1"/><circle cx="908.2" cy="284" r="2.3" fill="#fff" stroke="#26d0a4" stroke-width="1"/><circle cx="963.8" cy="230.3" r="2.3" fill="#fff" stroke="#26d0a4" stroke-width="1"/><circle cx="1019.4" cy="273.5" r="2.3" fill="#fff" stroke="#26d0a4" stroke-width="1"/><circle cx="1075.0" cy="230.8" r="2.3" fill="#fff" stroke="#26d0a4" stroke-width="1"/><circle cx="1130.6" cy="230.3" r="2.3" fill="#fff" stroke="#26d0a4" stroke-width="1"/><circle cx="1186.2" cy="240.8" r="2.3" fill="#fff" stroke="#26d0a4" stroke-width="1"/><circle cx="1241.8" cy="230.3" r="2.3" fill="#fff" stroke="#26d0a4" stroke-width="1"/><circle cx="1297.4" cy="236.4" r="2.3" fill="#fff" stroke="#26d0a4" stroke-width="1"/><circle cx="1353.0" cy="230.3" r="2.3" fill="#fff" stroke="#26d0a4" stroke-width="1"/><circle cx="1408.6" cy="230.3" r="2.3" fill="#fff" stroke="#26d0a4" stroke-width="1"/><circle cx="1464.2" cy="266" r="2.3" fill="#fff" stroke="#26d0a4" stroke-width="1"/><circle cx="1519.8" cy="247.7" r="2.3" fill="#fff" stroke="#26d0a4" stroke-width="1"/><circle cx="1575.3" cy="230.3" r="2.3" fill="#fff" stroke="#26d0a4" stroke-width="1"/><circle cx="1630.9" cy="230.3" r="2.3" fill="#fff" stroke="#26d0a4" stroke-width="1"/><circle cx="1686.5" cy="230.3" r="2.3" fill="#fff" stroke="#26d0a4" stroke-width="1"/><circle cx="1742.1" cy="230.3" r="2.3" fill="#fff" stroke="#26d0a4" stroke-width="1"/><circle cx="1797.7" cy="252.5" r="2.3" fill="#fff" stroke="#26d0a4" stroke-width="1"/><text x="1213.5" y="195" text-anchor="middle" font-size="14" font-weight="bold" fill="#48558a" font-family="Liberation Sans, sans-serif">月排放趋势图</text><rect x="1589" y="186" width="11.5" height="12" rx="1.5" fill="#26d0a4"/><rect x="1603" y="184" width="11" height="14" rx="1.5" fill="#e36464"/><text x="1619.5" y="193.5" font-size="12" fill="#333" font-family="Liberation Sans, sans-serif">每日浓度平均值</text><line x1="1714" y1="190.5" x2="1739" y2="190.5" stroke="#e88888" stroke-width="1.5"/><circle cx="1726.5" cy="190.5" r="5" fill="#fafefd" stroke="#e88888" stroke-width="1.5"/><text x="1744" y="193.5" font-size="12" fill="#333" font-family="Liberation Sans, sans-serif">每日浓度最大值</text><line x1="542" y1="373.5" x2="1885" y2="373.5" stroke="#dcdfe6" stroke-width="1"/><rect x="1159" y="364.5" width="108.5" height="17.5" fill="#fff"/><text x="1213.5" y="379" text-anchor="middle" font-size="13.5" fill="#222" font-family="Liberation Sans, sans-serif">2023-05-22</text><line x1="602.5" y1="499.5" x2="1826.5" y2="499.5" stroke="#363d62" stroke-width="1" stroke-dasharray="4 4"/><line x1="602.5" y1="486.5" x2="1826.5" y2="486.5" stroke="#363d62" stroke-width="1" stroke-dasharray="4 4"/><line x1="602.5" y1="473.5" x2="1826.5" y2="473.5" stroke="#363d62" stroke-width="1" stroke-dasharray="4 4"/><line x1="602.5" y1="460.5" x2="1826.5" y2="460.5" stroke="#363d62" stroke-width="1" stroke-dasharray="4 4"/><line x1="602.5" y1="447.5" x2="1826.5" y2="447.5" stroke="#363d62" stroke-width="1" stroke-dasharray="4 4"/><line x1="602.5" y1="434.5" x2="1826.5" y2="434.5" stroke="#363d62" stroke-width="1" stroke-dasharray="4 4"/><line x1="602.5" y1="434.5" x2="602.5" y2="512.5" stroke="#48558a" stroke-width="1"/><line x1="602.5" y1="512.5" x2="1826.5" y2="512.5" stroke="#48558a" stroke-width="1"/><text x="590.5" y="514.7" text-anchor="end" font-size="12.5" fill="#333" font-family="Liberation Sans, sans-serif">0</text><text x="590.5" y="501.7" text-anchor="end" font-size="12.5" fill="#333" font-family="Liberation Sans, sans-serif">0.2</text><text x="590.5" y="488.7" text-anchor="end" font-size="12.5" fill="#333" font-family="Liberation Sans, sans-serif">0.4</text><text x="590.5" y="475.7" text-anchor="end" font-size="12.5" fill="#333" font-family="Liberation Sans, sans-serif">0.6</text><text x="590.5" y="462.7" text-anchor="end" font-size="12.5" fill="#333" font-family="Liberation Sans, sans-serif">0.8</text><text x="590.5" y="449.7" text-anchor="end" font-size="12.5" fill="#333" font-family="Liberation Sans, sans-serif">1</text><text x="590.5" y="436.7" text-anchor="end" font-size="12.5" fill="#333" font-family="Liberation Sans, sans-serif">1.2</text><text transform="translate(559.5,473) rotate(-90)" text-anchor="middle" font-size="12" fill="#48558a" font-family="Liberation Sans, sans-serif">油烟浓度 <tspan letter-spacing="0.8">(mg/m3)</tspan></text><text x="602.5" y="528.5" text-anchor="middle" font-size="12" fill="#c8c8c8" font-family="Liberation Sans, sans-serif">00:00</text><text x="653.5" y="528.5" text-anchor="middle" font-size="12" fill="#c8c8c8" font-family="Liberation Sans, sans-serif">01:00</text><text x="704.5" y="528.5" text-anchor="middle" font-size="12" fill="#c8c8c8" font-family="Liberation Sans, sans-serif">02:00</text><text x="755.5" y="528.5" text-anchor="middle" font-size="12" fill="#c8c8c8" font-family="Liberation Sans, sans-serif">03:00</text><text x="806.5" y="528.5" text-anchor="middle" font-size="12" fill="#c8c8c8" font-family="Liberation Sans, sans-serif">04:00</text><text x="857.5" y="528.5" text-anchor="middle" font-size="12" fill="#c8c8c8" font-family="Liberation Sans, sans-serif">05:00</text><text x="908.5" y="528.5" text-anchor="middle" font-size="12" fill="#c8c8c8" font-family="Liberation Sans, sans-serif">06:00</text><text x="959.5" y="528.5" text-anchor="middle" font-size="12" fill="#c8c8c8" font-family="Liberation Sans, sans-serif">07:00</text><text x="1010.5" y="528.5" text-anchor="middle" font-size="12" fill="#c8c8c8" font-family="Liberation Sans, sans-serif">08:00</text><text x="1061.5" y="528.5" text-anchor="middle" font-size="12" fill="#c8c8c8" font-family="Liberation Sans, sans-serif">09:00</text><text x="1112.5" y="528.5" text-anchor="middle" font-size="12" fill="#c8c8c8" font-family="Liberation Sans, sans-serif">10:00</text><text x="1163.5" y="528.5" text-anchor="middle" font-size="12" fill="#c8c8c8" font-family="Liberation Sans, sans-serif">11:00</text><text x="1214.5" y="528.5" text-anchor="middle" font-size="12" fill="#c8c8c8" font-family="Liberation Sans, sans-serif">12:00</text><text x="1265.5" y="528.5" text-anchor="middle" font-size="12" fill="#c8c8c8" font-family="Liberation Sans, sans-serif">13:00</text><text x="1316.5" y="528.5" text-anchor="middle" font-size="12" fill="#c8c8c8" font-family="Liberation Sans, sans-serif">14:00</text><text x="1367.5" y="528.5" text-anchor="middle" font-size="12" fill="#c8c8c8" font-family="Liberation Sans, sans-serif">15:00</text><text x="1418.5" y="528.5" text-anchor="middle" font-size="12" fill="#c8c8c8" font-family="Liberation Sans, sans-serif">16:00</text><text x="1469.5" y="528.5" text-anchor="middle" font-size="12" fill="#c8c8c8" font-family="Liberation Sans, sans-serif">17:00</text><text x="1520.5" y="528.5" text-anchor="middle" font-size="12" fill="#c8c8c8" font-family="Liberation Sans, sans-serif">18:00</text><text x="1571.5" y="528.5" text-anchor="middle" font-size="12" fill="#c8c8c8" font-family="Liberation Sans, sans-serif">19:00</text><text x="1622.5" y="528.5" text-anchor="middle" font-size="12" fill="#c8c8c8" font-family="Liberation Sans, sans-serif">20:00</text><text x="1673.5" y="528.5" text-anchor="middle" font-size="12" fill="#c8c8c8" font-family="Liberation Sans, sans-serif">21:00</text><text x="1724.5" y="528.5" text-anchor="middle" font-size="12" fill="#c8c8c8" font-family="Liberation Sans, sans-serif">22:00</text><text x="1775.5" y="528.5" text-anchor="middle" font-size="12" fill="#c8c8c8" font-family="Liberation Sans, sans-serif">23:00</text><text x="1213.5" y="410" text-anchor="middle" font-size="14" font-weight="bold" fill="#48558a" font-family="Liberation Sans, sans-serif">日排放趋势图</text><text x="1213.5" y="421.5" text-anchor="middle" font-size="12" fill="#a8a8a8" font-family="Liberation Sans, sans-serif">(显示指定日期0点到24点的因子变化趋势)</text><line x1="1439.3" y1="434" x2="1439.3" y2="512" stroke="#e3e3e3" stroke-width="1.5"/><polyline points="602.4,510.6 611.9,510.9" fill="none" stroke="#26d0a4" stroke-width="2.2" stroke-linejoin="round"/><polyline points="631.6,509.6 633.9,507.2 634.4,474.3 635.2,451.2 635.8,453 636.3,474.3 637,458.2 637.7,488.4 638.9,436.6 640.1,440.4 641,458.2 641.8,467.7 642.4,458.2 643.2,468 644.3,477.1 645.7,494 648.5,504.4 652.3,508.2 657.5,508.2 658.9,504.4 661.7,500.6 663.6,484.1 665,491.2 666.9,501.6 669.3,505.3 671.6,505.8 674.9,509.6 679.3,510.9 684.6,510.9 687.2,507.7 689.3,509.3 696.7,509.3" fill="none" stroke="#26d0a4" stroke-width="2.2" stroke-linejoin="round"/><polyline points="1169.4,510 1171.2,509.1 1172.1,488.2 1173,459.8 1173.9,459.5 1174.8,467.8 1175.6,477.5 1176.4,486.4 1177,443.9 1178.1,443 1178.7,457.2 1179.2,474 1180.8,488.2 1182.6,496.2 1183.6,472.2 1184.5,469.6 1185.6,453.6 1186.3,461.6 1186.7,470.5 1188.1,472.3 1189.8,488.2 1192.1,499.7 1193.4,484.7 1194.3,487.3 1195.2,497.1 1197.8,504.2 1201.4,508.6 1204.9,510.8 1213.7,510.9 1214.8,497.2 1220.6,506.6 1221.6,500.3 1223.2,505 1226.9,507.2 1229,504.5 1233.7,509.3 1240,510.9 1253.2,511.2" fill="none" stroke="#26d0a4" stroke-width="2.2" stroke-linejoin="round"/><polyline points="1278.5,510.3 1283.8,509.6 1287.5,509.8 1292.7,510.9 1301.7,511.4" fill="none" stroke="#26d0a4" stroke-width="2.2" stroke-linejoin="round"/><polyline points="1463.2,509.7 1465.8,511.3 1466.8,505 1468.7,503.4 1470.5,506.1 1472.1,505 1473.7,506.1 1474.7,495.5 1476.3,484 1477.9,489.2 1479.5,492.4 1482.6,501.8 1486.8,508.2 1489.5,504" fill="none" stroke="#26d0a4" stroke-width="2.2" stroke-linejoin="round"/><circle cx="602.4" cy="510.6" r="2.3" fill="#fff" stroke="#26d0a4" stroke-width="1"/><circle cx="653" cy="508.8" r="2.3" fill="#fff" stroke="#26d0a4" stroke-width="1"/><circle cx="1213.7" cy="510.9" r="2.3" fill="#fff" stroke="#26d0a4" stroke-width="1"/><circle cx="1468.7" cy="503.4" r="2.3" fill="#fff" stroke="#26d0a4" stroke-width="1"/><rect x="1459.3" y="431.1" width="45.7" height="51.6" rx="4" fill="rgba(50,50,50,0.7)"/><text x="1482" y="452" text-anchor="middle" font-size="14" fill="#fff" font-family="Liberation Sans, sans-serif">16:25</text><circle cx="1469" cy="468" r="5" fill="#c23531"/><rect x="602.0" y="581.0" width="1223.0" height="82.0" fill="#d0d0d0"/><rect x="630.8" y="581.0" width="2.30" height="82.0" fill="#ffffff"/><rect x="633.1" y="581.0" width="2.90" height="82.0" fill="#fdd34f"/><rect x="636" y="581.0" width="1.30" height="82.0" fill="#ffffff"/><rect x="637.3" y="581.0" width="3.10" height="82.0" fill="#fdd34f"/><rect x="640.4" y="581.0" width="0.40" height="82.0" fill="#ffffff"/><rect x="640.8" y="581.0" width="1.30" height="82.0" fill="#26d0a4"/><rect x="642.1" y="581.0" width="1.00" height="82.0" fill="#ffffff"/><rect x="656" y="581.0" width="5.90" height="82.0" fill="#26d0a4"/><rect x="661.9" y="581.0" width="2.50" height="82.0" fill="#fdd34f"/><rect x="664.4" y="581.0" width="0.40" height="82.0" fill="#ffffff"/><rect x="664.8" y="581.0" width="2.10" height="82.0" fill="#26d0a4"/><rect x="666.9" y="581.0" width="1.00" height="82.0" fill="#ffffff"/><rect x="667.9" y="581.0" width="2.30" height="82.0" fill="#26d0a4"/><rect x="670.2" y="581.0" width="1.50" height="82.0" fill="#ffffff"/><rect x="680.2" y="581.0" width="1.90" height="82.0" fill="#ffffff"/><rect x="682.1" y="581.0" width="2.70" height="82.0" fill="#dedede"/><rect x="684.8" y="581.0" width="2.30" height="82.0" fill="#ffffff"/><rect x="1169" y="581.0" width="0.70" height="82.0" fill="#ffffff"/><rect x="1169.7" y="581.0" width="3.30" height="82.0" fill="#fdd34f"/><rect x="1173" y="581.0" width="0.90" height="82.0" fill="#ffffff"/><rect x="1173.9" y="581.0" width="4.00" height="82.0" fill="#26d0a4"/><rect x="1177.9" y="581.0" width="1.10" height="82.0" fill="#ffffff"/><rect x="1179" y="581.0" width="2.00" height="82.0" fill="#26d0a4"/><rect x="1181" y="581.0" width="1.90" height="82.0" fill="#fde9a6"/><rect x="1182.9" y="581.0" width="1.10" height="82.0" fill="#ffffff"/><rect x="1184" y="581.0" width="1.00" height="82.0" fill="#fdd34f"/><rect x="1185" y="581.0" width="2.00" height="82.0" fill="#ffffff"/><rect x="1187" y="581.0" width="2.00" height="82.0" fill="#66e0c0"/><rect x="1189" y="581.0" width="3.50" height="82.0" fill="#ffffff"/><rect x="1192.5" y="581.0" width="2.20" height="82.0" fill="#fdd34f"/><rect x="1194.7" y="581.0" width="1.50" height="82.0" fill="#26d0a4"/><rect x="1196.2" y="581.0" width="0.90" height="82.0" fill="#ffffff"/><rect x="1197.1" y="581.0" width="2.00" height="82.0" fill="#66e0c0"/><rect x="1199.1" y="581.0" width="0.90" height="82.0" fill="#ffffff"/><rect x="1211.7" y="581.0" width="1.30" height="82.0" fill="#ffffff"/><rect x="1213" y="581.0" width="1.00" height="82.0" fill="#fdd34f"/><rect x="1214" y="581.0" width="1.90" height="82.0" fill="#66e0c0"/><rect x="1215.9" y="581.0" width="1.10" height="82.0" fill="#ffffff"/><rect x="1217" y="581.0" width="2.10" height="82.0" fill="#26d0a4"/><rect x="1219.1" y="581.0" width="0.60" height="82.0" fill="#ffffff"/><rect x="1219.7" y="581.0" width="2.20" height="82.0" fill="#fdd34f"/><rect x="1221.9" y="581.0" width="2.30" height="82.0" fill="#26d0a4"/><rect x="1224.2" y="581.0" width="0.80" height="82.0" fill="#ffffff"/><rect x="1225" y="581.0" width="3.80" height="82.0" fill="#fdd34f"/><rect x="1228.8" y="581.0" width="1.20" height="82.0" fill="#ffffff"/><rect x="1276.9" y="581.0" width="1.00" height="82.0" fill="#ffffff"/><rect x="1277.9" y="581.0" width="2.10" height="82.0" fill="#66e0c0"/><rect x="1280" y="581.0" width="1.00" height="82.0" fill="#ffffff"/><rect x="1281" y="581.0" width="1.10" height="82.0" fill="#26d0a4"/><rect x="1282.1" y="581.0" width="0.90" height="82.0" fill="#ffffff"/><rect x="1283" y="581.0" width="2.10" height="82.0" fill="#66e0c0"/><rect x="1285.1" y="581.0" width="1.30" height="82.0" fill="#fde9a6"/><rect x="1286.4" y="581.0" width="1.60" height="82.0" fill="#ffffff"/><rect x="1461.9" y="581.0" width="3.10" height="82.0" fill="#ffffff"/><rect x="1465" y="581.0" width="1.90" height="82.0" fill="#fde9a6"/><rect x="1466.9" y="581.0" width="1.00" height="82.0" fill="#ffffff"/><rect x="1467.9" y="581.0" width="1.20" height="82.0" fill="#fdd34f"/><rect x="1469.1" y="581.0" width="1.80" height="82.0" fill="#ffffff"/><rect x="1470.9" y="581.0" width="2.10" height="82.0" fill="#26d0a4"/><rect x="1473" y="581.0" width="0.80" height="82.0" fill="#ffffff"/><rect x="1473.8" y="581.0" width="1.30" height="82.0" fill="#fdd34f"/><rect x="1475.1" y="581.0" width="5.90" height="82.0" fill="#26d0a4"/><rect x="1481" y="581.0" width="2.00" height="82.0" fill="#fde9a6"/><rect x="1483" y="581.0" width="1.00" height="82.0" fill="#ffffff"/><rect x="1484" y="581.0" width="1.90" height="82.0" fill="#fdd34f"/><rect x="1485.9" y="581.0" width="1.10" height="82.0" fill="#ffffff"/><rect x="1487" y="581.0" width="1.90" height="82.0" fill="#fde9a6"/><rect x="1488.9" y="581.0" width="2.30" height="82.0" fill="#26d0a4"/><rect x="1491.2" y="581.0" width="0.80" height="82.0" fill="#ffffff"/><line x1="602.0" y1="663.5" x2="1825.5" y2="663.5" stroke="#333" stroke-width="1"/><line x1="602.5" y1="663.0" x2="602.5" y2="668.0" stroke="#333" stroke-width="1"/><line x1="653.5" y1="663.0" x2="653.5" y2="668.0" stroke="#333" stroke-width="1"/><line x1="704.5" y1="663.0" x2="704.5" y2="668.0" stroke="#333" stroke-width="1"/><line x1="755.5" y1="663.0" x2="755.5" y2="668.0" stroke="#333" stroke-width="1"/><line x1="806.5" y1="663.0" x2="806.5" y2="668.0" stroke="#333" stroke-width="1"/><line x1="857.5" y1="663.0" x2="857.5" y2="668.0" stroke="#333" stroke-width="1"/><line x1="908.5" y1="663.0" x2="908.5" y2="668.0" stroke="#333" stroke-width="1"/><line x1="959.5" y1="663.0" x2="959.5" y2="668.0" stroke="#333" stroke-width="1"/><line x1="1010.5" y1="663.0" x2="1010.5" y2="668.0" stroke="#333" stroke-width="1"/><line x1="1061.5" y1="663.0" x2="1061.5" y2="668.0" stroke="#333" stroke-width="1"/><line x1="1112.5" y1="663.0" x2="1112.5" y2="668.0" stroke="#333" stroke-width="1"/><line x1="1163.5" y1="663.0" x2="1163.5" y2="668.0" stroke="#333" stroke-width="1"/><line x1="1214.5" y1="663.0" x2="1214.5" y2="668.0" stroke="#333" stroke-width="1"/><line x1="1265.5" y1="663.0" x2="1265.5" y2="668.0" stroke="#333" stroke-width="1"/><line x1="1316.5" y1="663.0" x2="1316.5" y2="668.0" stroke="#333" stroke-width="1"/><line x1="1367.5" y1="663.0" x2="1367.5" y2="668.0" stroke="#333" stroke-width="1"/><line x1="1418.5" y1="663.0" x2="1418.5" y2="668.0" stroke="#333" stroke-width="1"/><line x1="1469.5" y1="663.0" x2="1469.5" y2="668.0" stroke="#333" stroke-width="1"/><line x1="1520.5" y1="663.0" x2="1520.5" y2="668.0" stroke="#333" stroke-width="1"/><line x1="1571.5" y1="663.0" x2="1571.5" y2="668.0" stroke="#333" stroke-width="1"/><line x1="1622.5" y1="663.0" x2="1622.5" y2="668.0" stroke="#333" stroke-width="1"/><line x1="1673.5" y1="663.0" x2="1673.5" y2="668.0" stroke="#333" stroke-width="1"/><line x1="1724.5" y1="663.0" x2="1724.5" y2="668.0" stroke="#333" stroke-width="1"/><line x1="1775.5" y1="663.0" x2="1775.5" y2="668.0" stroke="#333" stroke-width="1"/><text x="602.5" y="680" text-anchor="middle" font-size="12.5" fill="#3a3a3a" font-family="Liberation Sans, sans-serif">00:00</text><text x="653.5" y="680" text-anchor="middle" font-size="12.5" fill="#3a3a3a" font-family="Liberation Sans, sans-serif">01:00</text><text x="704.5" y="680" text-anchor="middle" font-size="12.5" fill="#3a3a3a" font-family="Liberation Sans, sans-serif">02:00</text><text x="755.5" y="680" text-anchor="middle" font-size="12.5" fill="#3a3a3a" font-family="Liberation Sans, sans-serif">03:00</text><text x="806.5" y="680" text-anchor="middle" font-size="12.5" fill="#3a3a3a" font-family="Liberation Sans, sans-serif">04:00</text><text x="857.5" y="680" text-anchor="middle" font-size="12.5" fill="#3a3a3a" font-family="Liberation Sans, sans-serif">05:00</text><text x="908.5" y="680" text-anchor="middle" font-size="12.5" fill="#3a3a3a" font-family="Liberation Sans, sans-serif">06:00</text><text x="959.5" y="680" text-anchor="middle" font-size="12.5" fill="#3a3a3a" font-family="Liberation Sans, sans-serif">07:00</text><text x="1010.5" y="680" text-anchor="middle" font-size="12.5" fill="#3a3a3a" font-family="Liberation Sans, sans-serif">08:00</text><text x="1061.5" y="680" text-anchor="middle" font-size="12.5" fill="#3a3a3a" font-family="Liberation Sans, sans-serif">09:00</text><text x="1112.5" y="680" text-anchor="middle" font-size="12.5" fill="#3a3a3a" font-family="Liberation Sans, sans-serif">10:00</text><text x="1163.5" y="680" text-anchor="middle" font-size="12.5" fill="#3a3a3a" font-family="Liberation Sans, sans-serif">11:00</text><text x="1214.5" y="680" text-anchor="middle" font-size="12.5" fill="#3a3a3a" font-family="Liberation Sans, sans-serif">12:00</text><text x="1265.5" y="680" text-anchor="middle" font-size="12.5" fill="#3a3a3a" font-family="Liberation Sans, sans-serif">13:00</text><text x="1316.5" y="680" text-anchor="middle" font-size="12.5" fill="#3a3a3a" font-family="Liberation Sans, sans-serif">14:00</text><text x="1367.5" y="680" text-anchor="middle" font-size="12.5" fill="#3a3a3a" font-family="Liberation Sans, sans-serif">15:00</text><text x="1418.5" y="680" text-anchor="middle" font-size="12.5" fill="#3a3a3a" font-family="Liberation Sans, sans-serif">16:00</text><text x="1469.5" y="680" text-anchor="middle" font-size="12.5" fill="#3a3a3a" font-family="Liberation Sans, sans-serif">17:00</text><text x="1520.5" y="680" text-anchor="middle" font-size="12.5" fill="#3a3a3a" font-family="Liberation Sans, sans-serif">18:00</text><text x="1571.5" y="680" text-anchor="middle" font-size="12.5" fill="#3a3a3a" font-family="Liberation Sans, sans-serif">19:00</text><text x="1622.5" y="680" text-anchor="middle" font-size="12.5" fill="#3a3a3a" font-family="Liberation Sans, sans-serif">20:00</text><text x="1673.5" y="680" text-anchor="middle" font-size="12.5" fill="#3a3a3a" font-family="Liberation Sans, sans-serif">21:00</text><text x="1724.5" y="680" text-anchor="middle" font-size="12.5" fill="#3a3a3a" font-family="Liberation Sans, sans-serif">22:00</text><text x="1775.5" y="680" text-anchor="middle" font-size="12.5" fill="#3a3a3a" font-family="Liberation Sans, sans-serif">23:00</text><text x="1213.5" y="557.5" text-anchor="middle" font-size="14" font-weight="bold" fill="#48558a" font-family="Liberation Sans, sans-serif">工作状态</text><text x="1213.5" y="570" text-anchor="middle" font-size="12" fill="#a8a8a8" font-family="Liberation Sans, sans-serif">(显示指定日期0点到24点的风机和净化器运行状态)</text><rect x="1509" y="557" width="14" height="14" fill="#fdd34f"/><text x="1539" y="566.5" font-size="12" fill="#333" font-family="Liberation Sans, sans-serif">风机运行</text><rect x="1597" y="557" width="14" height="14" fill="#26d0a4"/><text x="1627" y="566.5" font-size="12" fill="#333" font-family="Liberation Sans, sans-serif">净化器运行</text><rect x="1697" y="557" width="14" height="14" fill="#d0d0d0"/><text x="1727" y="566.5" font-size="12" fill="#333" font-family="Liberation Sans, sans-serif">风机与净化器未运行</text><rect x="592.00" y="744.0" width="51.50" height="29.0" fill="#26d0a4"/><rect x="643.40" y="744.0" width="51.50" height="29.0" fill="#26d0a4"/><rect x="694.80" y="744.0" width="51.50" height="29.0" fill="#d0d0d0"/><rect x="746.20" y="744.0" width="51.50" height="29.0" fill="#d0d0d0"/><rect x="797.60" y="744.0" width="51.50" height="29.0" fill="#d0d0d0"/><rect x="849.00" y="744.0" width="51.50" height="29.0" fill="#d0d0d0"/><rect x="900.40" y="744.0" width="51.50" height="29.0" fill="#d0d0d0"/><rect x="951.80" y="744.0" width="51.50" height="29.0" fill="#d0d0d0"/><rect x="1003.20" y="744.0" width="51.50" height="29.0" fill="#d0d0d0"/><rect x="1054.60" y="744.0" width="51.50" height="29.0" fill="#d0d0d0"/><rect x="1106.00" y="744.0" width="51.50" height="29.0" fill="#d0d0d0"/><rect x="1157.40" y="744.0" width="51.50" height="29.0" fill="#26d0a4"/><rect x="1208.80" y="744.0" width="51.50" height="29.0" fill="#26d0a4"/><rect x="1260.20" y="744.0" width="51.50" height="29.0" fill="#26d0a4"/><rect x="1311.60" y="744.0" width="51.50" height="29.0" fill="#d0d0d0"/><rect x="1363.00" y="744.0" width="51.50" height="29.0" fill="#d0d0d0"/><rect x="1414.40" y="744.0" width="51.50" height="29.0" fill="#26d0a4"/><rect x="1465.80" y="744.0" width="51.50" height="29.0" fill="#26d0a4"/><rect x="1517.20" y="744.0" width="51.50" height="29.0" fill="#d0d0d0"/><rect x="1568.60" y="744.0" width="51.50" height="29.0" fill="#d0d0d0"/><rect x="1620.00" y="744.0" width="51.50" height="29.0" fill="#d0d0d0"/><rect x="1671.40" y="744.0" width="51.50" height="29.0" fill="#d0d0d0"/><rect x="1722.80" y="744.0" width="51.50" height="29.0" fill="#d0d0d0"/><rect x="1774.20" y="744.0" width="51.50" height="29.0" fill="#d0d0d0"/><line x1="643.4" y1="744.0" x2="643.4" y2="773.0" stroke="rgba(255,255,255,0.35)" stroke-width="1"/><line x1="694.8" y1="744.0" x2="694.8" y2="773.0" stroke="rgba(255,255,255,0.35)" stroke-width="1"/><line x1="746.2" y1="744.0" x2="746.2" y2="773.0" stroke="rgba(255,255,255,0.35)" stroke-width="1"/><line x1="797.6" y1="744.0" x2="797.6" y2="773.0" stroke="rgba(255,255,255,0.35)" stroke-width="1"/><line x1="849.0" y1="744.0" x2="849.0" y2="773.0" stroke="rgba(255,255,255,0.35)" stroke-width="1"/><line x1="900.4" y1="744.0" x2="900.4" y2="773.0" stroke="rgba(255,255,255,0.35)" stroke-width="1"/><line x1="951.8" y1="744.0" x2="951.8" y2="773.0" stroke="rgba(255,255,255,0.35)" stroke-width="1"/><line x1="1003.2" y1="744.0" x2="1003.2" y2="773.0" stroke="rgba(255,255,255,0.35)" stroke-width="1"/><line x1="1054.6" y1="744.0" x2="1054.6" y2="773.0" stroke="rgba(255,255,255,0.35)" stroke-width="1"/><line x1="1106.0" y1="744.0" x2="1106.0" y2="773.0" stroke="rgba(255,255,255,0.35)" stroke-width="1"/><line x1="1157.4" y1="744.0" x2="1157.4" y2="773.0" stroke="rgba(255,255,255,0.35)" stroke-width="1"/><line x1="1208.8" y1="744.0" x2="1208.8" y2="773.0" stroke="rgba(255,255,255,0.35)" stroke-width="1"/><line x1="1260.2" y1="744.0" x2="1260.2" y2="773.0" stroke="rgba(255,255,255,0.35)" stroke-width="1"/><line x1="1311.6" y1="744.0" x2="1311.6" y2="773.0" stroke="rgba(255,255,255,0.35)" stroke-width="1"/><line x1="1363.0" y1="744.0" x2="1363.0" y2="773.0" stroke="rgba(255,255,255,0.35)" stroke-width="1"/><line x1="1414.4" y1="744.0" x2="1414.4" y2="773.0" stroke="rgba(255,255,255,0.35)" stroke-width="1"/><line x1="1465.8" y1="744.0" x2="1465.8" y2="773.0" stroke="rgba(255,255,255,0.35)" stroke-width="1"/><line x1="1517.2" y1="744.0" x2="1517.2" y2="773.0" stroke="rgba(255,255,255,0.35)" stroke-width="1"/><line x1="1568.6" y1="744.0" x2="1568.6" y2="773.0" stroke="rgba(255,255,255,0.35)" stroke-width="1"/><line x1="1620.0" y1="744.0" x2="1620.0" y2="773.0" stroke="rgba(255,255,255,0.35)" stroke-width="1"/><line x1="1671.4" y1="744.0" x2="1671.4" y2="773.0" stroke="rgba(255,255,255,0.35)" stroke-width="1"/><line x1="1722.8" y1="744.0" x2="1722.8" y2="773.0" stroke="rgba(255,255,255,0.35)" stroke-width="1"/><line x1="1774.2" y1="744.0" x2="1774.2" y2="773.0" stroke="rgba(255,255,255,0.35)" stroke-width="1"/><line x1="591.5" y1="773.5" x2="1825.6" y2="773.5" stroke="#333" stroke-width="1"/><line x1="592.5" y1="773.0" x2="592.5" y2="778.0" stroke="#333" stroke-width="1"/><text x="592.5" y="790" text-anchor="middle" font-size="12.5" fill="#3a3a3a" font-family="Liberation Sans, sans-serif">0</text><line x1="643.5" y1="773.0" x2="643.5" y2="778.0" stroke="#333" stroke-width="1"/><text x="643.5" y="790" text-anchor="middle" font-size="12.5" fill="#3a3a3a" font-family="Liberation Sans, sans-serif">1</text><line x1="694.5" y1="773.0" x2="694.5" y2="778.0" stroke="#333" stroke-width="1"/><text x="694.5" y="790" text-anchor="middle" font-size="12.5" fill="#3a3a3a" font-family="Liberation Sans, sans-serif">2</text><line x1="746.5" y1="773.0" x2="746.5" y2="778.0" stroke="#333" stroke-width="1"/><text x="746.5" y="790" text-anchor="middle" font-size="12.5" fill="#3a3a3a" font-family="Liberation Sans, sans-serif">3</text><line x1="797.5" y1="773.0" x2="797.5" y2="778.0" stroke="#333" stroke-width="1"/><text x="797.5" y="790" text-anchor="middle" font-size="12.5" fill="#3a3a3a" font-family="Liberation Sans, sans-serif">4</text><line x1="849.5" y1="773.0" x2="849.5" y2="778.0" stroke="#333" stroke-width="1"/><text x="849.5" y="790" text-anchor="middle" font-size="12.5" fill="#3a3a3a" font-family="Liberation Sans, sans-serif">5</text><line x1="900.5" y1="773.0" x2="900.5" y2="778.0" stroke="#333" stroke-width="1"/><text x="900.5" y="790" text-anchor="middle" font-size="12.5" fill="#3a3a3a" font-family="Liberation Sans, sans-serif">6</text><line x1="951.5" y1="773.0" x2="951.5" y2="778.0" stroke="#333" stroke-width="1"/><text x="951.5" y="790" text-anchor="middle" font-size="12.5" fill="#3a3a3a" font-family="Liberation Sans, sans-serif">7</text><line x1="1003.5" y1="773.0" x2="1003.5" y2="778.0" stroke="#333" stroke-width="1"/><text x="1003.5" y="790" text-anchor="middle" font-size="12.5" fill="#3a3a3a" font-family="Liberation Sans, sans-serif">8</text><line x1="1054.5" y1="773.0" x2="1054.5" y2="778.0" stroke="#333" stroke-width="1"/><text x="1054.5" y="790" text-anchor="middle" font-size="12.5" fill="#3a3a3a" font-family="Liberation Sans, sans-serif">9</text><line x1="1106.5" y1="773.0" x2="1106.5" y2="778.0" stroke="#333" stroke-width="1"/><text x="1106.5" y="790" text-anchor="middle" font-size="12.5" fill="#3a3a3a" font-family="Liberation Sans, sans-serif">10</text><line x1="1157.5" y1="773.0" x2="1157.5" y2="778.0" stroke="#333" stroke-width="1"/><text x="1157.5" y="790" text-anchor="middle" font-size="12.5" fill="#3a3a3a" font-family="Liberation Sans, sans-serif">11</text><line x1="1208.5" y1="773.0" x2="1208.5" y2="778.0" stroke="#333" stroke-width="1"/><text x="1208.5" y="790" text-anchor="middle" font-size="12.5" fill="#3a3a3a" font-family="Liberation Sans, sans-serif">12</text><line x1="1260.5" y1="773.0" x2="1260.5" y2="778.0" stroke="#333" stroke-width="1"/><text x="1260.5" y="790" text-anchor="middle" font-size="12.5" fill="#3a3a3a" font-family="Liberation Sans, sans-serif">13</text><line x1="1311.5" y1="773.0" x2="1311.5" y2="778.0" stroke="#333" stroke-width="1"/><text x="1311.5" y="790" text-anchor="middle" font-size="12.5" fill="#3a3a3a" font-family="Liberation Sans, sans-serif">14</text><line x1="1363.5" y1="773.0" x2="1363.5" y2="778.0" stroke="#333" stroke-width="1"/><text x="1363.5" y="790" text-anchor="middle" font-size="12.5" fill="#3a3a3a" font-family="Liberation Sans, sans-serif">15</text><line x1="1414.5" y1="773.0" x2="1414.5" y2="778.0" stroke="#333" stroke-width="1"/><text x="1414.5" y="790" text-anchor="middle" font-size="12.5" fill="#3a3a3a" font-family="Liberation Sans, sans-serif">16</text><line x1="1465.5" y1="773.0" x2="1465.5" y2="778.0" stroke="#333" stroke-width="1"/><text x="1465.5" y="790" text-anchor="middle" font-size="12.5" fill="#3a3a3a" font-family="Liberation Sans, sans-serif">17</text><line x1="1517.5" y1="773.0" x2="1517.5" y2="778.0" stroke="#333" stroke-width="1"/><text x="1517.5" y="790" text-anchor="middle" font-size="12.5" fill="#3a3a3a" font-family="Liberation Sans, sans-serif">18</text><line x1="1568.5" y1="773.0" x2="1568.5" y2="778.0" stroke="#333" stroke-width="1"/><text x="1568.5" y="790" text-anchor="middle" font-size="12.5" fill="#3a3a3a" font-family="Liberation Sans, sans-serif">19</text><line x1="1620.5" y1="773.0" x2="1620.5" y2="778.0" stroke="#333" stroke-width="1"/><text x="1620.5" y="790" text-anchor="middle" font-size="12.5" fill="#3a3a3a" font-family="Liberation Sans, sans-serif">20</text><line x1="1671.5" y1="773.0" x2="1671.5" y2="778.0" stroke="#333" stroke-width="1"/><text x="1671.5" y="790" text-anchor="middle" font-size="12.5" fill="#3a3a3a" font-family="Liberation Sans, sans-serif">21</text><line x1="1722.5" y1="773.0" x2="1722.5" y2="778.0" stroke="#333" stroke-width="1"/><text x="1722.5" y="790" text-anchor="middle" font-size="12.5" fill="#3a3a3a" font-family="Liberation Sans, sans-serif">22</text><line x1="1774.5" y1="773.0" x2="1774.5" y2="778.0" stroke="#333" stroke-width="1"/><text x="1774.5" y="790" text-anchor="middle" font-size="12.5" fill="#3a3a3a" font-family="Liberation Sans, sans-serif">23</text><line x1="1825.5" y1="773.0" x2="1825.5" y2="778.0" stroke="#333" stroke-width="1"/><text x="1825.5" y="790" text-anchor="middle" font-size="12.5" fill="#3a3a3a" font-family="Liberation Sans, sans-serif">24</text><text x="1213.5" y="720" text-anchor="middle" font-size="14" font-weight="bold" fill="#48558a" font-family="Liberation Sans, sans-serif">达标率</text><text x="1213.5" y="734" text-anchor="middle" font-size="12" fill="#a8a8a8" font-family="Liberation Sans, sans-serif">(显示指定日期0点到24点的因子达标率情况，以小时为单位统计)</text><rect x="1705" y="719" width="14" height="14" fill="#26d0a4"/><text x="1734.5" y="728.5" font-size="12" fill="#333" font-family="Liberation Sans, sans-serif">达标</text><rect x="1769" y="719" width="14" height="14" fill="#d0d0d0"/><text x="1799" y="728.5" font-size="12" fill="#333" font-family="Liberation Sans, sans-serif">未统计</text></svg>
</body></html>
